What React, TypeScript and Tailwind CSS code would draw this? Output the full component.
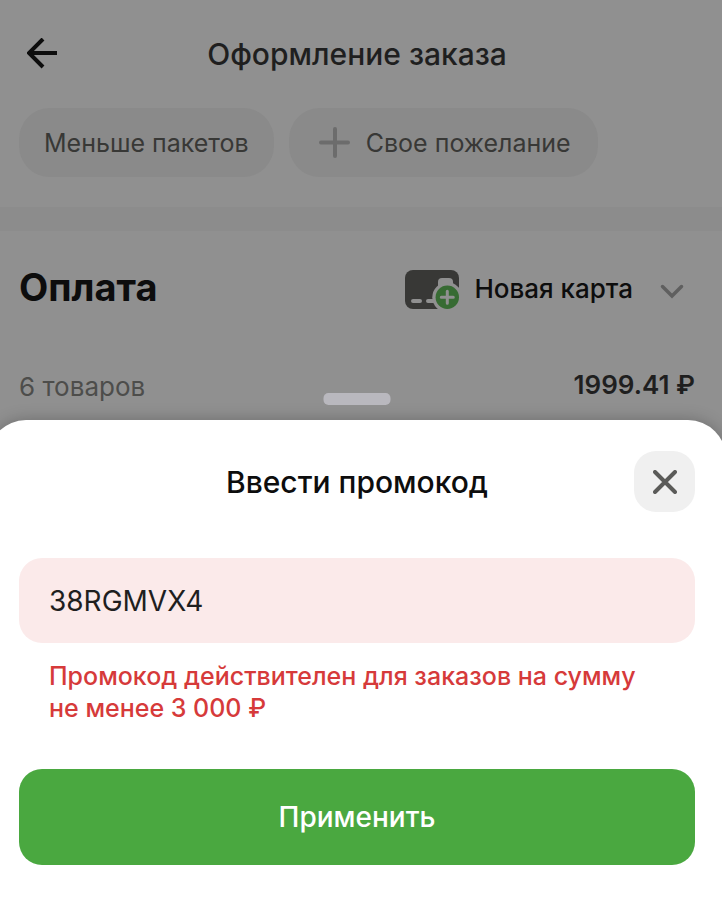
import React, { useState } from "react";

function BackIcon() {
  return (
    <svg width="32" height="32" viewBox="0 0 32 32" fill="none" stroke="#0d0d0d" strokeWidth="4" aria-hidden="true">
      <path d="M30 15H3" />
      <path d="M16 1L2 15L16 29" />
    </svg>
  );
}

function PlusIcon() {
  return (
    <svg width="32" height="32" viewBox="0 0 32 32" fill="none" stroke="#6c6c6c" strokeWidth="4" strokeLinecap="round" aria-hidden="true">
      <path d="M16 2V29M2 15.5H29" />
    </svg>
  );
}

function CardIcon() {
  return (
    <svg width="54" height="39" viewBox="0 0 54 39" fill="none" aria-hidden="true">
      <rect width="54" height="39" rx="8" fill="#383836" />
      <path d="M33 16V12Q33 8 37 8H44Q48 8 48 12V16Z" fill="#909090" />
      <circle cx="42.3" cy="27.3" r="15" fill="#909090" />
      <path d="M8 31H15M23 31H30" stroke="#909090" strokeWidth="4" strokeLinecap="round" />
      <circle cx="42.3" cy="27.3" r="11.7" fill="#376b33" />
      <path d="M42.3 21.3V33.3M36.3 27.3H48.3" stroke="#909090" strokeWidth="3" strokeLinecap="round" />
    </svg>
  );
}

function ChevronIcon() {
  return (
    <svg className="mt-1" width="24" height="15" viewBox="0 0 24 15" fill="none" stroke="#5f5f5f" strokeWidth="3.5" strokeLinecap="round" aria-hidden="true">
      <path d="M2.5 2.5L12 12L21.5 2.5" />
    </svg>
  );
}

function CloseIcon() {
  return (
    <svg width="24" height="24" viewBox="0 0 24 24" fill="none" stroke="#5b5b59" strokeWidth="4" strokeLinecap="round" aria-hidden="true">
      <path d="M2 2L22 22M22 2L2 22" />
    </svg>
  );
}

export default function App() {
  const [code, setCode] = useState("38RGMVX4");

  return (
    <div className="min-h-screen flex flex-col overflow-x-hidden bg-[#909090] font-['Inter','Open_Sans',sans-serif]">
      {/* Dimmed checkout page */}
      <main>
        <header className="grid grid-cols-[48px_1fr_48px] items-center h-[108px] pl-[19px] pr-[27px]">
          <button type="button" aria-label="Назад" className="pl-2">
            <BackIcon />
          </button>
          <h1 className="text-center text-[30px] leading-9 font-medium text-[#1f1f1f]">Оформление заказа</h1>
        </header>

        <div className="flex gap-[15px] pl-[19px] text-[25px] leading-8 text-[#383836]">
          <button type="button" className="h-[69px] px-[25px] rounded-[31px] bg-[#8a8a8a]">
            Меньше пакетов
          </button>
          <button type="button" className="flex items-center gap-[15px] h-[69px] pl-[30px] pr-[27px] rounded-[31px] bg-[#8a8a8a]">
            <PlusIcon />
            Свое пожелание
          </button>
        </div>

        <div className="h-6 mt-[30px] bg-[#8c8c8c]" />

        <section className="pl-[19px] pr-[27px] pb-[15px]">
          <div className="flex items-center justify-between pt-9">
            <h2 className="pb-1 text-[38px] leading-10 font-bold text-[#0d0d0d]">Оплата</h2>
            <button type="button" className="flex items-center pr-[11px] text-[26px] leading-10 font-medium text-[#0d0d0d]">
              <CardIcon />
              <span className="ml-[15px] mr-[27px]">Новая карта</span>
              <ChevronIcon />
            </button>
          </div>
          <div className="flex items-center justify-between mt-[54px]">
            <span className="pt-1 text-[26px] leading-9 text-[#4d4d4b]">6 товаров</span>
            <span className="text-[26px] leading-9 font-semibold text-[#1f1f1f]">1999.41 ₽</span>
          </div>
        </section>
      </main>

      {/* Promo code sheet */}
      <section
        role="dialog"
        aria-labelledby="promo-title"
        className="relative grow -ml-3 -mr-1 px-[31px] pt-[31px] pb-9 rounded-t-[38px] bg-white shadow-[0_0_16px_rgba(0,0,0,0.25)]"
      >
        <div className="absolute left-1/2 -top-[27px] -translate-x-1/2 w-[67px] h-3 rounded-[5px] bg-[#b9b8be]" />

        <div className="grid grid-cols-[61px_1fr_61px] items-center">
          <h2 id="promo-title" className="col-start-2 text-center text-[30px] leading-9 font-medium text-[#0d0d0d]">
            Ввести промокод
          </h2>
          <button type="button" aria-label="Закрыть" className="flex items-center justify-center h-[61px] rounded-[22px] bg-[#f0f0f0]">
            <CloseIcon />
          </button>
        </div>

        <form onSubmit={(e) => e.preventDefault()}>
          <input
            type="text"
            aria-label="Промокод"
            aria-invalid="true"
            aria-describedby="promo-error"
            value={code}
            onChange={(e) => setCode(e.target.value)}
            className="block w-full h-[85px] mt-[46px] px-[30px] rounded-[23px] bg-[#fbeaea] text-[28px] text-[#1f1f1f] outline-none"
          />
          <p id="promo-error" className="mt-[17px] px-[30px] text-[25px] leading-8 font-medium text-[#d63a3a]">
            Промокод действителен для заказов на сумму
            <br />
            не менее 3 000 ₽
          </p>
          <button type="submit" className="w-full h-24 mt-[45px] rounded-[23px] bg-[#4aa840] text-[28px] font-medium text-white">
            Применить
          </button>
        </form>
      </section>
    </div>
  );
}
